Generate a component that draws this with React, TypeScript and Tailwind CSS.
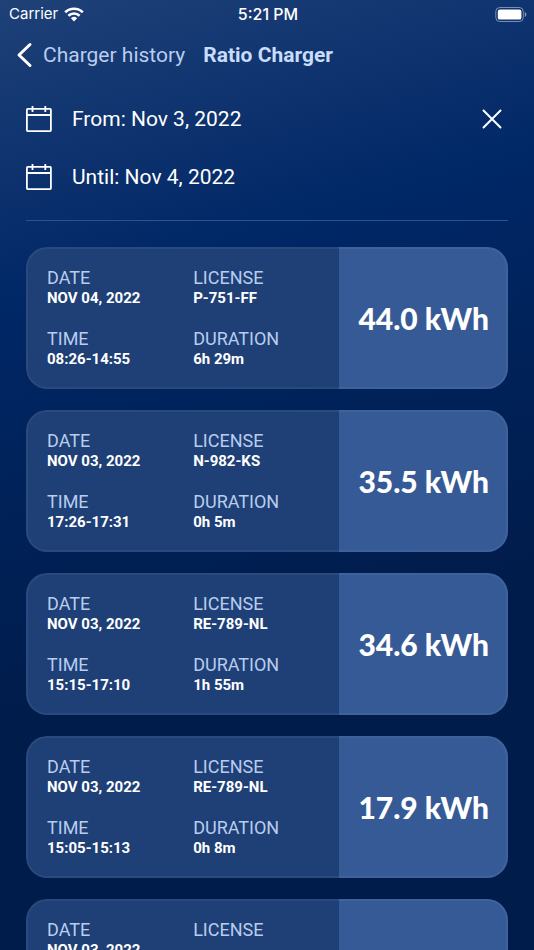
type Session = {
  date: string;
  license: string;
  time: string;
  duration: string;
  energy: string;
};

const sessions: Session[] = [
  { date: 'NOV 04, 2022', license: 'P-751-FF', time: '08:26-14:55', duration: '6h 29m', energy: '44.0 kWh' },
  { date: 'NOV 03, 2022', license: 'N-982-KS', time: '17:26-17:31', duration: '0h 5m', energy: '35.5 kWh' },
  { date: 'NOV 03, 2022', license: 'RE-789-NL', time: '15:15-17:10', duration: '1h 55m', energy: '34.6 kWh' },
  { date: 'NOV 03, 2022', license: 'RE-789-NL', time: '15:05-15:13', duration: '0h 8m', energy: '17.9 kWh' },
  { date: 'NOV 03, 2022', license: '', time: '', duration: '', energy: '' },
];

function WifiIcon() {
  return (
    <svg className="h-[15px] w-5" viewBox="0 0 20 15" fill="none" stroke="white" strokeWidth="2.6" aria-hidden="true">
      <path d="M1.2 5.3a12.6 12.6 0 0 1 17.6 0" />
      <path d="M4.4 8.8a8 8 0 0 1 11.2 0" />
      <path d="M6.9 11.2a4.5 4.5 0 0 1 6.2 0L10 14.4z" fill="white" stroke="none" />
    </svg>
  );
}

function BatteryIcon() {
  return (
    <svg className="h-[15px] w-8" viewBox="0 0 32 15" aria-hidden="true">
      <rect x="0.8" y="0.5" width="27.5" height="14" rx="4" fill="none" stroke="white" strokeOpacity="0.45" />
      <rect x="2.8" y="2.4" width="23.6" height="10.2" rx="2.2" fill="white" />
      <path d="M29.8 5v5c1.1-.4 1.6-1.4 1.6-2.5S30.9 5.4 29.8 5z" fill="white" fillOpacity="0.5" />
    </svg>
  );
}

function CalendarIcon() {
  return (
    <svg className="h-[26px] w-[26px] shrink-0" viewBox="0 0 26 26" fill="none" stroke="white" strokeWidth="1.8" aria-hidden="true">
      <rect x="0.9" y="2.9" width="24" height="22.2" rx="0.8" />
      <path d="M1 9h24M6.5 0v6M19.3 0v6" />
    </svg>
  );
}

function Field({ label, value }: { label: string; value: string }) {
  return (
    <div className="min-w-0">
      <dt className="text-lg leading-5 text-[#b9cdee]">{label}</dt>
      <dd className="h-5 text-[15px] leading-5 font-bold text-white">{value}</dd>
    </div>
  );
}

function SessionCard({ session }: { session: Session }) {
  return (
    <li className="relative flex shrink-0 overflow-hidden rounded-[21px] bg-[#1f4076] after:pointer-events-none after:absolute after:inset-0 after:rounded-[21px] after:border-2 after:border-white/5">
      <dl className="grid w-[65%] grid-cols-2 gap-y-[21px] pt-[21px] pb-5 pl-[21px]">
        <Field label="DATE" value={session.date} />
        <Field label="LICENSE" value={session.license} />
        <Field label="TIME" value={session.time} />
        <Field label="DURATION" value={session.duration} />
      </dl>
      <p className="flex w-[35%] items-center justify-center bg-[#365a95] font-['Lato',sans-serif] text-[30px] leading-10 font-black text-white">
        {session.energy}
      </p>
    </li>
  );
}

export default function App() {
  return (
    <div className="flex h-screen flex-col bg-[linear-gradient(164deg,#1f4178_0%,#002766_28%,#001c4b_66%,#001c4b_100%)] font-['Roboto',sans-serif]">
      <div className="grid h-7 shrink-0 grid-cols-3 items-center pr-[7px] pl-[9px] font-['Inter',sans-serif] text-[15px] text-white">
        <div className="flex items-center gap-1.5">
          <span>Carrier</span>
          <WifiIcon />
        </div>
        <span className="text-center text-base font-medium">5:21 PM</span>
        <span className="justify-self-end">
          <BatteryIcon />
        </span>
      </div>

      <header className="flex h-[54px] shrink-0 items-center pl-4 text-[21px] leading-[34px] text-[#c9dcfa]">
        <button type="button" className="flex items-center gap-2.5 text-[#b9cdee]">
          <svg className="h-[26px] w-[17px]" viewBox="0 0 17 26" fill="none" stroke="white" strokeWidth="3" strokeLinecap="round" strokeLinejoin="round" aria-hidden="true">
            <path d="M14 2.5 3 13l11 10.5" />
          </svg>
          Charger history
        </button>
        <h1 className="ml-[18px] font-bold">Ratio Charger</h1>
      </header>

      <main className="min-h-0 flex-1 overflow-y-auto px-[26px] [scrollbar-width:none]">
        <section className="flex flex-col gap-[18px] border-b border-[#2f5290] pt-[17px] pb-[23px] text-[21px] leading-[34px] text-white">
          <div className="flex h-10 items-center">
            <button type="button" className="flex items-center gap-5">
              <CalendarIcon />
              From: Nov 3, 2022
            </button>
            <button type="button" aria-label="Clear dates" className="mr-1.5 ml-auto">
              <svg className="h-5 w-5" viewBox="0 0 20 20" fill="none" stroke="white" strokeWidth="2" strokeLinecap="round" aria-hidden="true">
                <path d="M1.5 1.5l17 17M18.5 1.5l-17 17" />
              </svg>
            </button>
          </div>
          <button type="button" className="flex h-10 items-center gap-5">
            <CalendarIcon />
            Until: Nov 4, 2022
          </button>
        </section>

        <ul className="flex flex-col gap-[21px] py-[26px]">
          {sessions.map((session, index) => (
            <SessionCard key={index} session={session} />
          ))}
        </ul>
      </main>
    </div>
  );
}
